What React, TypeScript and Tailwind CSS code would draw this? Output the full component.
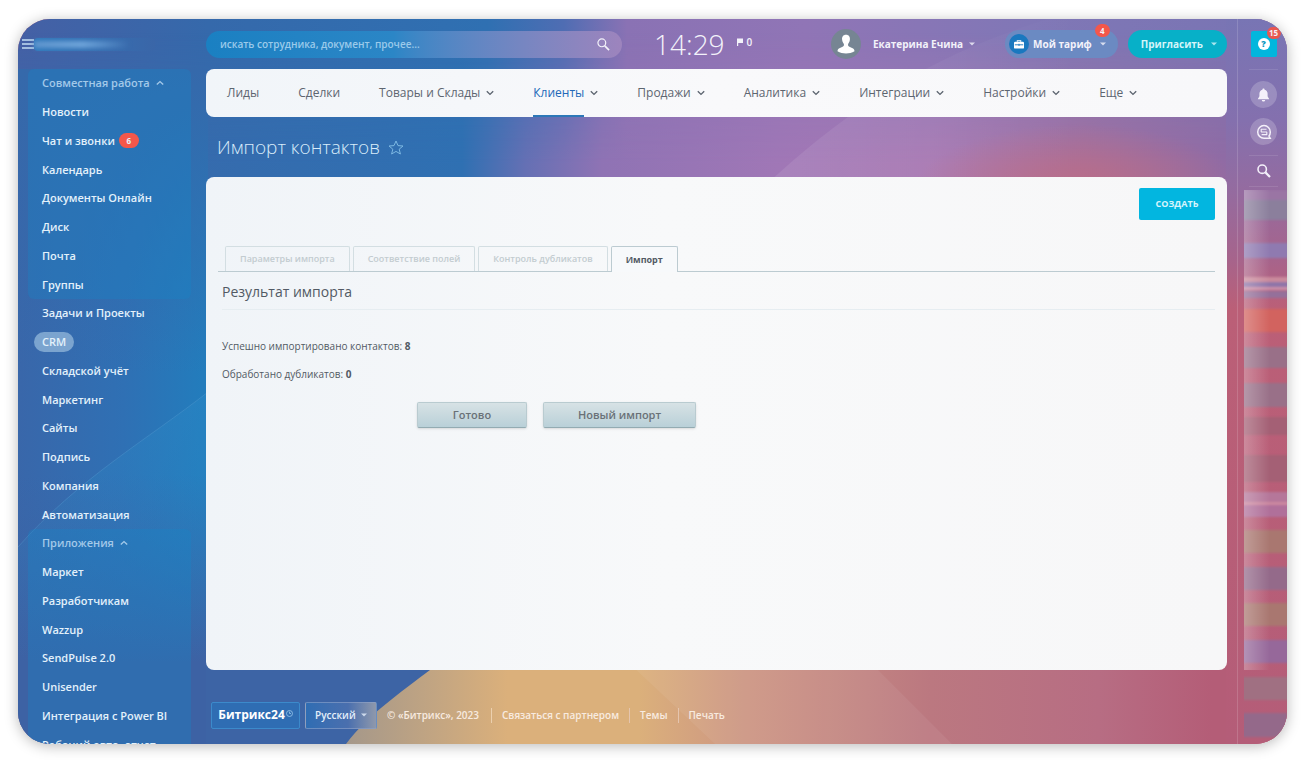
import React from "react";

type Item = { label: string; badge?: string; active?: boolean };

const teamItems: Item[] = [
  { label: "Новости" },
  { label: "Чат и звонки", badge: "6" },
  { label: "Календарь" },
  { label: "Документы Онлайн" },
  { label: "Диск" },
  { label: "Почта" },
  { label: "Группы" },
];

const mainItems: Item[] = [
  { label: "Задачи и Проекты" },
  { label: "CRM", active: true },
  { label: "Складской учёт" },
  { label: "Маркетинг" },
  { label: "Сайты" },
  { label: "Подпись" },
  { label: "Компания" },
  { label: "Автоматизация" },
];

const appItems: Item[] = [
  { label: "Маркет" },
  { label: "Разработчикам" },
  { label: "Wazzup" },
  { label: "SendPulse 2.0" },
  { label: "Unisender" },
  { label: "Интеграция с Power BI" },
  { label: "Рабочий авто, отчет" },
];

const navItems = [
  { label: "Лиды", menu: false },
  { label: "Сделки", menu: false },
  { label: "Товары и Склады", menu: true },
  { label: "Клиенты", menu: true, active: true },
  { label: "Продажи", menu: true },
  { label: "Аналитика", menu: true },
  { label: "Интеграции", menu: true },
  { label: "Настройки", menu: true },
  { label: "Еще", menu: true },
];

const stripes: [number, number, string][] = [
  [0, 10, "#9a74a4"],
  [10, 20, "#8b7f9c"],
  [53, 15, "#8f7ab0"],
  [87, 5, "#c98a9c"],
  [92, 5, "#8f75a8"],
  [97, 3, "#c98fa8"],
  [101, 7, "#95709a"],
  [119, 23, "#d2635f"],
  [157, 21, "#996f88"],
  [193, 24, "#996f88"],
  [227, 18, "#a46074"],
  [265, 27, "#a46074"],
  [302, 10, "#b5779a"],
  [312, 3, "#cc88a0"],
  [315, 12, "#b0709a"],
  [340, 23, "#a9776f"],
  [377, 23, "#946b8a"],
  [413, 23, "#a9776f"],
  [450, 23, "#96689a"],
  [487, 23, "#a06f82"],
  [523, 24, "#94698a"],
];

function Wallpaper() {
  return (
    <svg
      className="absolute inset-0 h-full w-full"
      viewBox="0 0 1269 725"
      preserveAspectRatio="none"
      aria-hidden="true"
    >
      <defs>
        <linearGradient id="top" x1="0" x2="1">
          <stop offset="0" stopColor="#4560a5" />
          <stop offset="0.15" stopColor="#3569ab" />
          <stop offset="0.37" stopColor="#2f70b2" />
          <stop offset="0.43" stopColor="#4f6db3" />
          <stop offset="0.48" stopColor="#8a72b4" />
          <stop offset="0.62" stopColor="#9075b6" />
          <stop offset="0.8" stopColor="#8077b6" />
          <stop offset="1" stopColor="#7874b3" />
        </linearGradient>
        <linearGradient id="band" x1="0" x2="1">
          <stop offset="0" stopColor="#3a68aa" />
          <stop offset="0.35" stopColor="#2f70b2" />
          <stop offset="0.4" stopColor="#6570b4" />
          <stop offset="0.46" stopColor="#8f73b4" />
          <stop offset="0.6" stopColor="#a077b6" />
          <stop offset="0.72" stopColor="#a878b2" />
          <stop offset="0.84" stopColor="#a4709f" />
          <stop offset="0.95" stopColor="#906ba4" />
        </linearGradient>
        <linearGradient id="fade" x1="0" x2="0" y1="0" y2="1">
          <stop offset="0.08" stopColor="#fff" stopOpacity="0" />
          <stop offset="0.85" stopColor="#fff" stopOpacity="1" />
        </linearGradient>
        <mask id="bandMask">
          <rect width="1269" height="170" fill="url(#fade)" />
        </mask>
        <linearGradient id="left" x1="0" y1="0" x2="1" y2="0.1">
          <stop offset="0" stopColor="#3a66a9" />
          <stop offset="0.6" stopColor="#2f70b4" />
          <stop offset="1" stopColor="#237cbc" />
        </linearGradient>
        <linearGradient id="leftDown" x1="0" x2="0" y1="0" y2="1">
          <stop offset="0" stopColor="#3569ab" stopOpacity="1" />
          <stop offset="0.45" stopColor="#3569ab" stopOpacity="0" />
          <stop offset="0.6" stopColor="#3d62a4" stopOpacity="0" />
          <stop offset="0.88" stopColor="#3d62a4" stopOpacity="1" />
        </linearGradient>
        <linearGradient id="wedge" x1="0" x2="0" y1="0" y2="1">
          <stop offset="0" stopColor="#2c8ac8" stopOpacity="0.4" />
          <stop offset="1" stopColor="#2c8ac8" stopOpacity="0" />
        </linearGradient>
        <linearGradient id="right" x1="0" x2="0" y1="0" y2="1">
          <stop offset="0" stopColor="#7875b4" />
          <stop offset="0.14" stopColor="#8470ae" />
          <stop offset="0.24" stopColor="#956b9f" />
          <stop offset="0.33" stopColor="#a6648c" />
          <stop offset="0.4" stopColor="#bb5f77" />
          <stop offset="1" stopColor="#b45d78" />
        </linearGradient>
        <linearGradient id="bottom" gradientUnits="userSpaceOnUse" x1="330" x2="1269" y1="0" y2="0">
          <stop offset="0" stopColor="#a5988a" />
          <stop offset="0.17" stopColor="#dbb07b" />
          <stop offset="0.31" stopColor="#dbb07b" />
          <stop offset="0.42" stopColor="#cd9683" />
          <stop offset="0.62" stopColor="#bb7880" />
          <stop offset="0.8" stopColor="#b76d83" />
          <stop offset="0.92" stopColor="#b45d77" />
        </linearGradient>
        <radialGradient id="glow">
          <stop offset="0" stopColor="#c06c80" stopOpacity="0.9" />
          <stop offset="1" stopColor="#c06c80" stopOpacity="0" />
        </radialGradient>
        <linearGradient id="facet" x1="0" x2="1">
          <stop offset="0" stopColor="#fff" stopOpacity="0.09" />
          <stop offset="0.6" stopColor="#fff" stopOpacity="0" />
        </linearGradient>
      </defs>
      <rect width="1269" height="725" fill="#b45d78" />
      <rect width="1269" height="170" fill="url(#top)" />
      <rect width="1269" height="170" fill="url(#band)" mask="url(#bandMask)" />
      <path d="M752 162 C820 100 900 40 1030 0 H1269 V162 Z" fill="url(#facet)" />
      <ellipse cx="1060" cy="180" rx="170" ry="75" fill="url(#glow)" />
      <rect y="50" width="190" height="675" fill="url(#left)" />
      <rect y="50" width="190" height="675" fill="url(#leftDown)" />
      <path d="M190 373 C130 420 60 460 0 528 V640 H190 Z" fill="url(#wedge)" />
      <path d="M190 373 C130 420 60 460 0 528" fill="none" stroke="#5a9fd0" strokeOpacity="0.35" />
      <rect x="188" y="645" width="1081" height="80" fill="url(#bottom)" />
      <path d="M188 645 H420 C390 668 350 695 328 725 H188 Z" fill="#3d64a5" />
      <path d="M612 645 L697 725 H934 L854 645 Z" fill="#fff" opacity="0.06" />
      <rect x="1208" width="61" height="725" fill="url(#right)" />
    </svg>
  );
}

function Chevron({ up = false, className = "" }: { up?: boolean; className?: string }) {
  return (
    <svg className={className} width="8" height="6" viewBox="0 0 8 6" fill="none" aria-hidden="true">
      <path d={up ? "M0.8 4.6 L4 1.6 L7.2 4.6" : "M0.8 1.3 L4 4.4 L7.2 1.3"} stroke="currentColor" strokeWidth="1.4" />
    </svg>
  );
}

function Caret() {
  return (
    <svg width="6" height="4" viewBox="0 0 6 4" aria-hidden="true">
      <path d="M0 0.5 H6 L3 3.5 Z" fill="currentColor" opacity="0.8" />
    </svg>
  );
}

function Magnifier({ size, light = false }: { size: number; light?: boolean }) {
  return (
    <svg width={size} height={size} viewBox="0 0 14 14" fill="none" stroke="currentColor" aria-hidden="true">
      <circle cx="5.2" cy="5.2" r="4.2" strokeWidth={light ? 1.3 : 1.6} />
      <path d="M8.4 8.4 L13 13" strokeWidth={light ? 1.8 : 2.2} />
    </svg>
  );
}

function MenuRow({ item }: { item: Item }) {
  return (
    <li className="flex items-center pl-[6px]">
      <a
        href="#"
        className={
          item.active
            ? "flex items-center rounded-full bg-[#7ba4cf] px-2 leading-5"
            : "flex items-center gap-1 whitespace-nowrap px-2 leading-5"
        }
      >
        {item.label}
        {item.badge && (
          <span className="flex h-[15px] w-5 items-center justify-center rounded-full bg-[#f4574a] text-[8px] font-bold">
            {item.badge}
          </span>
        )}
      </a>
    </li>
  );
}

function MenuGroup({ title, items }: { title?: string; items: Item[] }) {
  return (
    <ul
      className={
        title
          ? "mr-[15px] grid h-[230px] shrink-0 auto-rows-fr rounded-md bg-[#1388ca]/30"
          : "mr-[15px] grid h-[230px] shrink-0 auto-rows-fr"
      }
    >
      {title && (
        <li className="flex items-center pl-[6px]">
          <button className="flex items-center gap-[6px] px-2 leading-5 text-[#a3c9e9]">
            {title}
            <Chevron up />
          </button>
        </li>
      )}
      {items.map((item) => (
        <MenuRow key={item.label} item={item} />
      ))}
    </ul>
  );
}

function Sidebar() {
  return (
    <aside className="flex w-[188px] shrink-0 flex-col overflow-hidden text-[11px] font-semibold text-[#e3f1fb]">
      <div className="flex h-[50px] shrink-0 items-center pl-1">
        <button aria-label="Меню" className="text-[#c2ddf2]">
          <svg width="12" height="10" viewBox="0 0 12 10" fill="none" stroke="currentColor" strokeWidth="1.3">
            <path d="M0 1 H12 M0 5 H12 M0 9 H12" />
          </svg>
        </button>
        <div className="flex h-[13px] w-[121px] items-center rounded-sm bg-linear-to-r from-[#2e78bb] to-[#3a66a8]">
          <div className="h-[7px] w-[96px] bg-linear-to-r from-[#5f95cd] via-[#6fa4da] to-transparent blur-[2px]" />
        </div>
      </div>
      <nav className="flex flex-col pl-[10px]" aria-label="Разделы">
        <MenuGroup title="Совместная работа" items={teamItems} />
        <MenuGroup items={mainItems} />
        <MenuGroup title="Приложения" items={appItems} />
      </nav>
    </aside>
  );
}

function Header() {
  return (
    <header className="flex h-[50px] shrink-0 items-center text-[#f3f2fa]">
      <label className="flex h-[27px] w-full max-w-[416px] items-center rounded-full bg-linear-to-r from-[#1a80c2] via-[#2b86c6] via-45% to-[#9d84bd] pl-[14px] pr-3">
        <input
          aria-label="Поиск"
          placeholder="искать сотрудника, документ, прочее..."
          className="min-w-0 flex-1 bg-transparent text-[10px] font-semibold outline-none placeholder:text-[#9bcaea]"
        />
        <Magnifier size={13} light />
      </label>
      <div className="ml-8 text-[28px] font-light leading-8">14:29</div>
      <div className="ml-3 flex items-center gap-1 pb-1 text-[10px] font-semibold leading-3">
        <svg width="6" height="8" viewBox="0 0 6 8" aria-hidden="true">
          <path d="M0 0.5 H6 V5 H1.2 V8 H0 Z" fill="currentColor" />
        </svg>
        0
      </div>
      <div className="ml-auto flex items-center">
        <button className="flex items-center whitespace-nowrap text-[10px] font-bold">
          <span className="mr-3 flex size-[30px] items-center justify-center rounded-full bg-[#768593]">
            <svg width="18" height="20" viewBox="0 0 18 20" fill="#fff" aria-hidden="true">
              <path d="M9 0.8 C12 0.8 13.2 3 12.9 5.6 C12.7 7.6 12 8.9 11.1 10 C10.9 11.4 11.2 12.2 12.4 12.8 L15.6 14.3 C17 15 17.4 16 17.5 17.3 C15 19 12 19.4 9 19.4 C6 19.4 3 19 0.5 17.3 C0.6 16 1 15 2.4 14.3 L5.6 12.8 C6.8 12.2 7.1 11.4 6.9 10 C6 8.9 5.3 7.6 5.1 5.6 C4.8 3 6 0.8 9 0.8 Z" />
            </svg>
          </span>
          <span className="mr-[6px]">Екатерина Ечина</span>
          <Caret />
        </button>
        <button className="relative ml-[30px] flex h-7 items-center rounded-full bg-[#6b8ac2] pl-1 pr-3 text-[10px] font-bold">
          <span className="mr-1 flex size-5 items-center justify-center rounded-full bg-[#1a78bf]">
            <svg width="10" height="9" viewBox="0 0 10 9" aria-hidden="true">
              <path d="M3.3 1.8 V0.7 H6.7 V1.8" fill="none" stroke="#fff" strokeWidth="1.1" />
              <rect y="1.8" width="10" height="6.8" rx="1.2" fill="#fff" />
              <path d="M0.8 4.8 H9.2 M5 3.8 V6" stroke="#1a78bf" strokeWidth="0.9" />
            </svg>
          </span>
          <span className="mr-2 whitespace-nowrap">Мой тариф</span>
          <Caret />
          <span className="absolute -top-[6px] right-2 flex h-[13px] w-[15px] items-center justify-center rounded-full bg-[#f4574a] text-[8px] font-bold">
            4
          </span>
        </button>
        <button className="ml-[10px] flex h-7 items-center gap-2 rounded-full bg-[#07b0c8] pl-[13px] pr-[10px] text-[10px] font-bold text-[#d5f5f9]">
          Пригласить
          <Caret />
        </button>
      </div>
    </header>
  );
}

function CrmNav() {
  return (
    <nav
      aria-label="CRM"
      className="flex h-12 shrink-0 gap-[39px] overflow-hidden rounded-lg bg-linear-to-r from-[#f1f5f9] via-[#f9f9fb] to-[#f8f8fa] pl-[21px] text-[12px] font-medium text-[#5d6570]"
    >
      {navItems.map((item) => (
        <a key={item.label} href="#" className="flex items-center gap-[6px] whitespace-nowrap">
          <span
            className={
              item.active
                ? "flex h-full items-center border-y-2 border-t-transparent border-b-[#2d78b8] text-[#2268b8]"
                : "flex h-full items-center"
            }
          >
            {item.label}
          </span>
          {item.menu && <Chevron />}
        </a>
      ))}
    </nav>
  );
}

const tabs = ["Параметры импорта", "Соответствие полей", "Контроль дубликатов", "Импорт"];

function ImportPanel() {
  return (
    <section className="flex min-h-0 flex-1 flex-col rounded-lg bg-linear-to-r from-[#f0f4f8] via-[#f8f9fa] via-45% to-[#f7f7f8] pb-4 pl-3 pr-3 pt-[11px] text-[#525a64]">
      <div className="flex justify-end">
        <button className="h-8 w-[76px] rounded-xs bg-[#02b6e0] text-[9px] font-bold text-[#d5f4fc]">
          СОЗДАТЬ
        </button>
      </div>
      <div role="tablist" className="mt-[26px] flex h-[26px] gap-[3px] border-b border-[#bccbd1] pl-[7px] text-[9px] font-semibold">
        {tabs.map((tab) => (
          <button
            key={tab}
            role="tab"
            aria-selected={tab === "Импорт"}
            className={
              tab === "Импорт"
                ? "h-[26px] whitespace-nowrap rounded-t-xs border border-b-0 border-[#bccbd1] bg-[#f7f9fb] px-[14px] font-bold text-[#525a64]"
                : "h-[25px] whitespace-nowrap rounded-t-xs border border-b-0 border-[#d3dee2] px-[14px] text-[#c3ccd0]"
            }
          >
            {tab}
          </button>
        ))}
      </div>
      <div className="pl-1">
        <h2 className="border-b border-[#e6edf1] pb-[7px] pt-[10px] text-[14px] leading-5">Результат импорта</h2>
        <p className="mt-7 text-[10px] leading-4">
          Успешно импортировано контактов: <b>8</b>
        </p>
        <p className="mt-3 text-[10px] leading-4">
          Обработано дубликатов: <b>0</b>
        </p>
        <div className="mt-5 flex gap-4 pl-[195px] text-[11px] font-semibold text-[#697177]">
          <button className="h-[26px] w-[110px] rounded-xs border border-[#b9cbd0] border-b-[#93abb2] bg-linear-to-b from-[#d7e2e5] to-[#b9d0d8] shadow-sm">
            Готово
          </button>
          <button className="h-[26px] w-[153px] rounded-xs border border-[#b9cbd0] border-b-[#93abb2] bg-linear-to-b from-[#d7e2e5] to-[#b9d0d8] shadow-sm">
            Новый импорт
          </button>
        </div>
      </div>
    </section>
  );
}

function Footer() {
  return (
    <footer className="flex h-[74px] shrink-0 items-center whitespace-nowrap pb-px pl-[5px] pt-[17px] text-[10px] font-semibold text-[#f8ebe0]">
      <a
        href="#"
        className="flex h-[27px] w-[89px] items-center justify-center rounded-xs border border-[#3c8acb] bg-[#2f6db3] text-[12px] font-bold text-white"
      >
        Битрикс24
        <svg className="mb-1 ml-px" width="7" height="7" viewBox="0 0 7 7" fill="none" stroke="#9cc8ea" strokeWidth="0.8" aria-hidden="true">
          <circle cx="3.5" cy="3.5" r="3" />
          <path d="M3.5 1.6 V3.5 H5" />
        </svg>
      </a>
      <label className="relative ml-[5px] flex h-[27px] w-[72px] items-center rounded-xs border border-[#8fa3c9]/60 bg-linear-to-r from-[#2f6db3] via-[#4a6fae] via-60% to-[#8f98ab] text-[#e3eefa]">
        <select aria-label="Язык" className="h-full w-full appearance-none bg-transparent pl-[9px] outline-none">
          <option>Русский</option>
        </select>
        <span className="pointer-events-none absolute right-[9px]">
          <Caret />
        </span>
      </label>
      <span className="ml-[10px]">© «Битрикс», 2023</span>
      <a href="#" className="ml-3 border-l border-[#ecd0ae] pl-[10px]">
        Связаться с партнером
      </a>
      <a href="#" className="ml-[10px] border-l border-[#e5c5ae] pl-[10px]">
        Темы
      </a>
      <a href="#" className="ml-[10px] border-l border-[#e5c5ae] pl-[10px]">
        Печать
      </a>
    </footer>
  );
}

function Rail() {
  return (
    <aside className="flex w-[50px] shrink-0 flex-col border-l border-white/15 pl-[2px] text-[#f4f0fa]">
      <div className="flex h-[50px] shrink-0 items-center justify-center">
        <button aria-label="Помощь" className="relative flex size-[26px] items-center justify-center rounded-xs bg-[#02b6dd]">
          <span className="flex size-3 items-center justify-center rounded-full bg-white text-[9px] font-extrabold leading-3 text-[#0898c0]">
            ?
          </span>
          <span className="absolute -right-1 -top-1 flex h-3 w-[14px] items-center justify-center rounded-full bg-[#e9574f] text-[8px] font-bold">
            15
          </span>
        </button>
      </div>
      <div className="mx-[9px] flex h-[87px] shrink-0 flex-col items-center gap-[10px] border-y border-white/10 pt-[11px]">
        <button aria-label="Уведомления" className="flex size-[27px] shrink-0 items-center justify-center rounded-full bg-white/20">
          <svg width="13" height="14" viewBox="0 0 13 14" fill="currentColor" aria-hidden="true">
            <path d="M6.5 0.6 C7.2 0.6 7.6 1 7.6 1.7 C9.6 2.2 10.6 3.7 10.6 5.8 V8 C10.6 9.2 11.8 9.8 12.2 11.2 H0.8 C1.2 9.8 2.4 9.2 2.4 8 V5.8 C2.4 3.7 3.4 2.2 5.4 1.7 C5.4 1 5.8 0.6 6.5 0.6 Z M4.8 12 H8.2 C8 13 7.4 13.5 6.5 13.5 C5.6 13.5 5 13 4.8 12 Z" />
          </svg>
        </button>
        <button aria-label="Чаты" className="flex size-[27px] shrink-0 items-center justify-center rounded-full bg-white/20">
          <svg width="16" height="16" viewBox="0 0 16 16" fill="none" stroke="currentColor" aria-hidden="true">
            <path d="M14.2 14.2 H8 A6.3 6.3 0 1 1 14.3 7.9 C14.3 9.6 13.8 11 13 12 Z" strokeWidth="1.5" />
            <path d="M5 5.2 H10.5 M5 8 H11 M5.6 10.6 H11 M5.2 5 V8 M10.8 8 V11" strokeWidth="1.1" />
          </svg>
        </button>
      </div>
      <div className="mx-[9px] flex h-[31px] shrink-0 items-center justify-center border-b border-white/10">
        <button aria-label="Найти">
          <Magnifier size={14} />
        </button>
      </div>
      <div className="ml-1 mt-[3px] min-h-0 flex-1">
        <svg className="h-full w-full" viewBox="0 0 44 554" preserveAspectRatio="none" aria-hidden="true">
          <defs>
            <linearGradient id="haze" x1="0" x2="1">
              <stop offset="0" stopColor="#fff" stopOpacity="0.28" />
              <stop offset="0.6" stopColor="#fff" stopOpacity="0" />
            </linearGradient>
            <filter id="soft">
              <feGaussianBlur stdDeviation="0 1" />
            </filter>
          </defs>
          <g filter="url(#soft)">
            {stripes.map(([y, h, color]) => (
              <rect key={y} y={y} width="44" height={h} fill={color} />
            ))}
          </g>
          <rect width="44" height="480" fill="url(#haze)" />
        </svg>
      </div>
    </aside>
  );
}

export default function App() {
  return (
    <div className="h-screen overflow-hidden bg-white pb-[23px] pl-[18px] pr-6 pt-[19px] font-['Open_Sans','Noto_Sans',sans-serif]">
      <div className="relative h-full overflow-hidden rounded-[32px] shadow-[0_2px_14px_rgba(0,0,0,0.28)]">
        <Wallpaper />
        <div className="relative flex h-full">
          <Sidebar />
          <main className="mr-[10px] flex min-w-0 flex-1 flex-col">
            <Header />
            <CrmNav />
            <div className="flex h-[60px] shrink-0 items-center gap-2 pl-[11px] text-[#d8ecfa]">
              <h1 className="text-[19px] font-light">Импорт контактов</h1>
              <button aria-label="В избранное" className="text-[#7db8e2]">
                <svg width="16" height="15" viewBox="0 0 16 15" fill="none" stroke="currentColor" aria-hidden="true">
                  <path d="M8 1 L10 5.6 L15 6 L11.2 9.2 L12.4 14 L8 11.4 L3.6 14 L4.8 9.2 L1 6 L6 5.6 Z" />
                </svg>
              </button>
            </div>
            <ImportPanel />
            <Footer />
          </main>
          <Rail />
        </div>
      </div>
    </div>
  );
}
